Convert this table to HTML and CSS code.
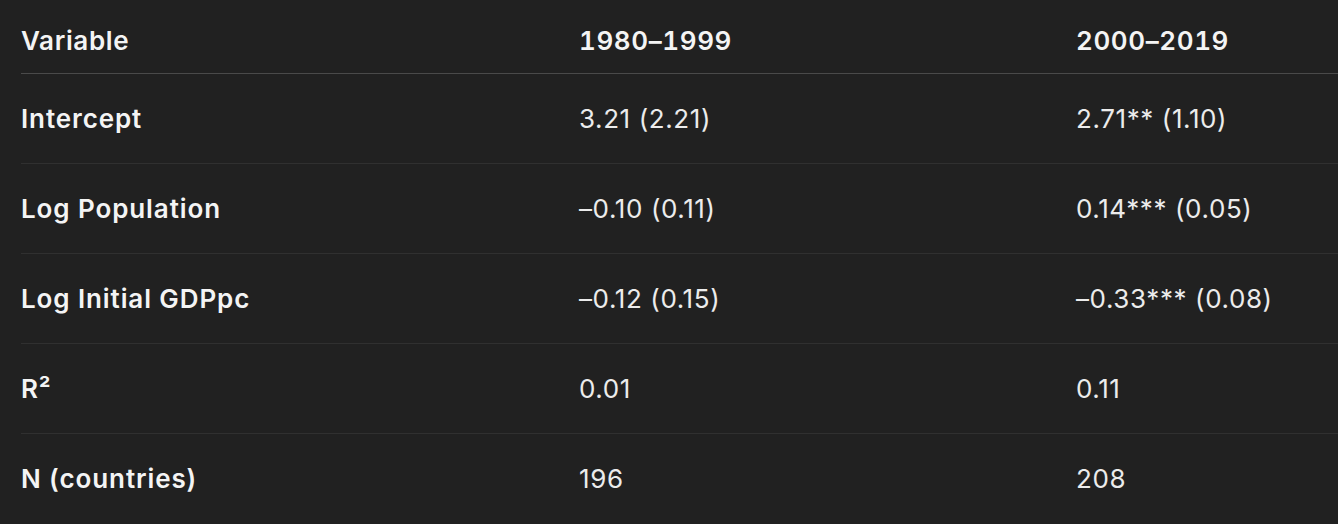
FILE: index.html
```html
<!DOCTYPE html>
<html lang="en">
<head>
<meta charset="utf-8">
<title>Regression table</title>
<link rel="stylesheet" href="styles.css">
</head>
<body>
<div class="wrap">
<table class="reg">
  <colgroup>
    <col class="c1"><col class="c2"><col class="c3">
  </colgroup>
  <thead>
    <tr><th>Variable</th><th class="yr">1980–1999</th><th class="yr">2000–2019</th></tr>
  </thead>
  <tbody>
    <tr><td class="lab">Intercept</td><td>3.21 (2.21)</td><td>2.71** (1.10)</td></tr>
    <tr><td class="lab">Log Population</td><td>–0.10 (0.11)</td><td>0.14*** (0.05)</td></tr>
    <tr><td class="lab">Log Initial GDPpc</td><td>–0.12 (0.15)</td><td>–0.33*** (0.08)</td></tr>
    <tr><td class="lab">R²</td><td>0.01</td><td>0.11</td></tr>
    <tr><td class="lab">N (countries)</td><td>196</td><td>208</td></tr>
  </tbody>
</table>
</div>
</body>
</html>
```
FILE: styles.css
```css
html, body {
  margin: 0;
  padding: 0;
  background: #212121;
}
body {
  font-family: Inter, "Noto Sans", "Liberation Sans", sans-serif;
  color: #ececec;
  overflow: hidden;
}
.wrap {
  padding-left: 21px;
}
.reg {
  border-collapse: collapse;
  width: 1317px;
  table-layout: fixed;
  font-size: 26px;
  line-height: 36px;
  letter-spacing: 0.6px;
}
.c1 { width: 558px; }
.c2 { width: 497px; }
.c3 { width: 262px; }
.reg th {
  text-align: left;
  font-weight: 600;
  color: #f4f4f4;
  padding: 23px 0 14px 0;
  border-bottom: 1px solid #4a4a4a;
  letter-spacing: 0.65px;
}
.reg th.yr {
  font-variant-numeric: tabular-nums;
  letter-spacing: 0.6px;
}
.reg td {
  padding: 27px 0 26px 0;
  border-bottom: 1px solid #303030;
  font-weight: 400;
  white-space: nowrap;
}
.reg td.lab {
  font-weight: 600;
  color: #f4f4f4;
  letter-spacing: 0.9px;
}
.reg tbody tr:last-child td {
  border-bottom: none;
}
```
